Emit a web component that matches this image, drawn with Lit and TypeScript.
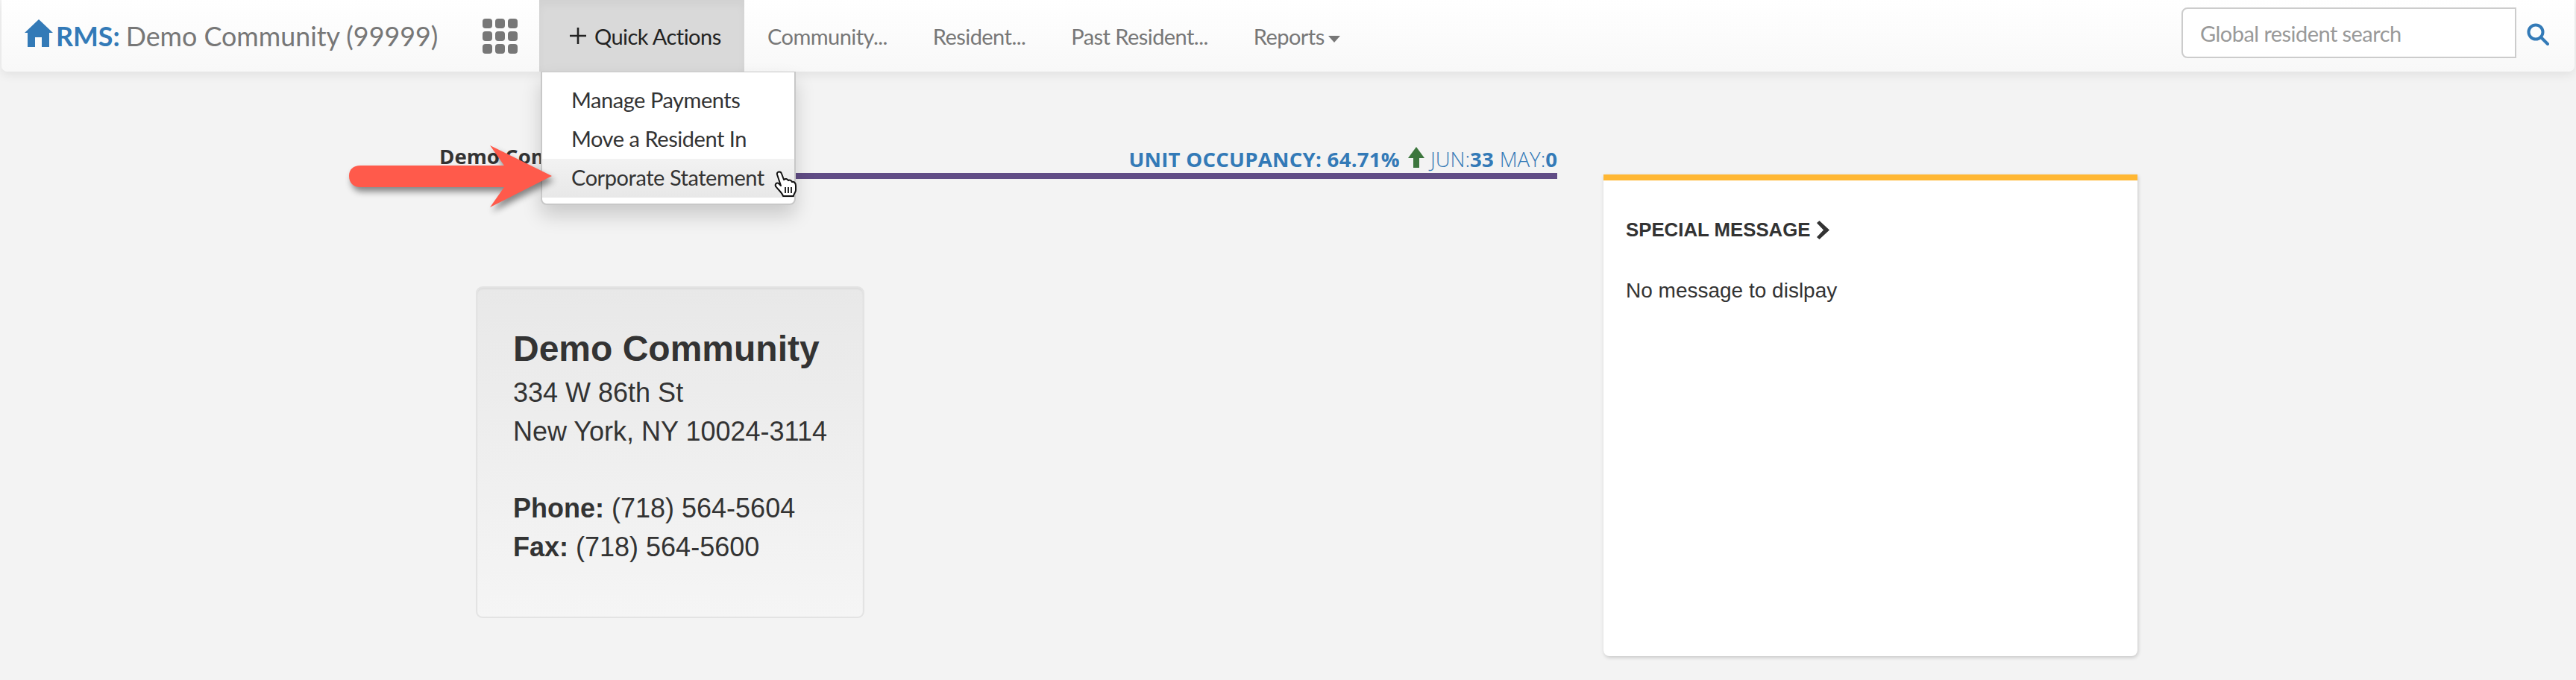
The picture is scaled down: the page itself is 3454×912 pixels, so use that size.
import { LitElement, html, css } from "lit";
import { customElement } from "lit/decorators.js";

@customElement("app-root")
export class AppRoot extends LitElement {
  static styles = css`
    :host {
      display: block;
      position: relative;
      width: 3454px;
      height: 912px;
      overflow: hidden;
      background: #f3f3f3;
      color: #333;
      font-family: "Liberation Sans", Arial, sans-serif;
    }

    .navbar {
      display: flex;
      align-items: stretch;
      height: 96px;
      margin: 0 2px;
      background: linear-gradient(to bottom, #ffffff, #f8f8f8);
      border-radius: 0 0 8px 8px;
      box-shadow: 0 4px 14px rgba(0, 0, 0, 0.08);
      font-family: Lato, sans-serif;
      font-size: 29px;
      letter-spacing: -0.55px;
      color: #777;
    }

    .brand {
      display: flex;
      align-items: center;
      width: 645px;
      padding-left: 30px;
      box-sizing: border-box;
      font-size: 35.8px;
      letter-spacing: 0;
      white-space: nowrap;
    }
    .brand svg {
      width: 40px;
      height: 38px;
      margin: -6px 3px 0 0;
      flex: none;
    }
    .brand b {
      color: #337ab7;
      margin-right: 8px;
    }

    .apps {
      display: block;
      width: 47px;
      height: 47px;
      align-self: center;
      margin-right: 29px;
      flex: none;
    }

    .quick {
      display: flex;
      align-items: center;
      width: 275px;
      padding-left: 41px;
      box-sizing: border-box;
      flex: none;
      background: #d9d9d9;
      box-shadow: inset 0 6px 12px rgba(0, 0, 0, 0.04);
      color: #222;
    }
    .quick svg {
      width: 22px;
      height: 22px;
      margin-right: 11px;
    }

    .links {
      display: flex;
      align-items: center;
      gap: 61px;
      padding-left: 31px;
    }
    .caret {
      display: inline-block;
      width: 0;
      height: 0;
      margin-left: 5px;
      vertical-align: middle;
      border-top: 9px solid #777;
      border-left: 8px solid transparent;
      border-right: 8px solid transparent;
    }

    .search {
      display: flex;
      align-items: center;
      margin-left: auto;
      padding-right: 34px;
    }
    .search-box {
      display: flex;
      align-items: center;
      width: 449px;
      height: 68px;
      box-sizing: border-box;
      padding-left: 23px;
      margin-top: -8px;
      background: #fff;
      border: 2px solid #ccc;
      border-radius: 8px 0 0 8px;
      color: #999;
    }
    .search svg {
      width: 30px;
      height: 30px;
      margin: -4px 0 0 14px;
    }

    .main {
      display: flex;
      padding-left: 589px;
    }

    .left {
      width: 1499px;
      flex: none;
    }

    .heading {
      display: flex;
      justify-content: space-between;
      align-items: flex-end;
      height: 144px;
      box-sizing: border-box;
      border-bottom: 8px solid #604c85;
      font-family: "Open Sans", sans-serif;
      font-size: 27.6px;
    }
    .heading .name {
      font-weight: 700;
      white-space: nowrap;
      margin-bottom: 4px;
    }
    .occupancy {
      display: flex;
      align-items: center;
      color: #337ab7;
      font-weight: 300;
      white-space: nowrap;
    }
    .occupancy b {
      font-weight: 700;
    }
    .occupancy .rate {
      letter-spacing: 0.25px;
    }
    .occupancy svg {
      width: 22px;
      height: 28px;
      margin: -4px 8px 0 11px;
    }
    .occupancy .gap {
      margin-left: 8px;
    }

    .well {
      width: 521px;
      height: 445px;
      box-sizing: border-box;
      margin: 144px 0 0 49px;
      padding: 49px 0 0 48px;
      background: linear-gradient(to bottom, #e8e8e8, #f5f5f5);
      border: 2px solid #e3e3e3;
      border-radius: 9px;
      box-shadow: inset 0 2px 2px rgba(0, 0, 0, 0.05);
      font-size: 36px;
      line-height: 52px;
      white-space: nowrap;
    }
    .well h2 {
      margin: 0;
      font-size: 48px;
      line-height: 66px;
      font-weight: 700;
    }
    .well .spacer {
      height: 51px;
    }

    .message {
      width: 716px;
      height: 646px;
      box-sizing: border-box;
      margin: 138px 0 0 62px;
      padding: 51px 30px 0;
      background: #fff;
      border-top: 8px solid #ffb733;
      border-radius: 0 0 8px 8px;
      box-shadow: 1px 2px 5px rgba(0, 0, 0, 0.18);
    }
    .message h3 {
      display: flex;
      align-items: center;
      margin: 0 0 49px;
      font-size: 25.8px;
      line-height: 30px;
      font-weight: 700;
    }
    .message h3 svg {
      width: 17px;
      height: 25px;
      margin-left: 8px;
    }
    .message p {
      margin: 0;
      font-size: 28px;
      line-height: 36px;
    }

    .dropdown {
      position: absolute;
      left: 725px;
      top: 96px;
      width: 342px;
      height: 179px;
      box-sizing: border-box;
      padding-top: 12px;
      background: #fff;
      border: 2px solid #c8c8c8;
      border-top-width: 1px;
      border-radius: 0 0 8px 8px;
      box-shadow: 0 14px 26px rgba(0, 0, 0, 0.17);
      font-family: Lato, sans-serif;
      font-size: 29px;
      letter-spacing: -0.45px;
      color: #333;
    }
    .dropdown div {
      height: 52px;
      line-height: 50px;
      padding-left: 39px;
      white-space: nowrap;
    }
    .dropdown .active {
      background: linear-gradient(to bottom, #f2f2f2, #e8e8e8);
    }

    .arrow {
      position: absolute;
      left: 460px;
      top: 190px;
      width: 300px;
      height: 105px;
      filter: drop-shadow(3px 6px 4px rgba(0, 0, 0, 0.45));
    }

    .cursor {
      position: absolute;
      left: 1030px;
      top: 222px;
      width: 46px;
      height: 50px;
    }
  `;

  protected render() {
    return html`
      <nav class="navbar">
        <div class="brand">
          <svg viewBox="0 0 40 38">
            <path fill="#337ab7" d="M20 0 39 18H34V37H24V24H15V37H5V18H1Z" />
          </svg>
          <b>RMS:</b> Demo Community (99999)
        </div>
        <svg class="apps" viewBox="0 0 47 47" fill="#777">
          <rect x="0" y="0" width="13" height="13" rx="4" />
          <rect x="17" y="0" width="13" height="13" rx="4" />
          <rect x="34" y="0" width="13" height="13" rx="4" />
          <rect x="0" y="17" width="13" height="13" rx="4" />
          <rect x="17" y="17" width="13" height="13" rx="4" />
          <rect x="34" y="17" width="13" height="13" rx="4" />
          <rect x="0" y="34" width="13" height="13" rx="4" />
          <rect x="17" y="34" width="13" height="13" rx="4" />
          <rect x="34" y="34" width="13" height="13" rx="4" />
        </svg>
        <div class="quick">
          <svg viewBox="0 0 22 22"><path fill="#222" d="M9.7 0h2.6v9.7H22v2.6h-9.7V22H9.7v-9.7H0V9.7h9.7Z" /></svg>
          Quick Actions
        </div>
        <div class="links">
          <span>Community...</span>
          <span>Resident...</span>
          <span>Past Resident...</span>
          <span>Reports<i class="caret"></i></span>
        </div>
        <div class="search">
          <div class="search-box">Global resident search</div>
          <svg viewBox="0 0 30 30" fill="none" stroke="#337ab7" stroke-width="4">
            <circle cx="12" cy="12" r="9.5" />
            <path d="M19 19 28 28" stroke-linecap="round" />
          </svg>
        </div>
      </nav>

      <div class="main">
        <div class="left">
          <div class="heading">
            <span class="name">Demo Community</span>
            <span class="occupancy">
              <b class="rate">UNIT OCCUPANCY: 64.71%</b>
              <svg viewBox="0 0 22 28"><path fill="#3c763d" d="M11 0 22 15H15V28H7V15H0Z" /></svg>
              JUN:<b>33</b><span class="gap">MAY:</span><b>0</b>
            </span>
          </div>
          <div class="well">
            <h2>Demo Community</h2>
            <div>334 W 86th St</div>
            <div>New York, NY 10024-3114</div>
            <div class="spacer"></div>
            <div><b>Phone:</b> (718) 564-5604</div>
            <div><b>Fax:</b> (718) 564-5600</div>
          </div>
        </div>
        <div class="message">
          <h3>
            SPECIAL MESSAGE
            <svg viewBox="0 0 17 25"><path fill="#333" d="M0 3 3.5 0 17 12.5 3.5 25 0 22 9 12.5Z" /></svg>
          </h3>
          <p>No message to dislpay</p>
        </div>
      </div>

      <div class="dropdown">
        <div>Manage Payments</div>
        <div>Move a Resident In</div>
        <div class="active">Corporate Statement</div>
      </div>

      <svg class="arrow" viewBox="0 0 300 105">
        <path fill="#ff5a4b" d="M197 5 280 46 197 88 216 61H23C14 61 8 55 8 46S14 32 23 32H216Z" />
      </svg>

      <svg class="cursor" viewBox="0 0 46 50">
        <path
          fill="#fff"
          stroke="#111"
          stroke-width="2"
          stroke-linejoin="round"
          d="M12 12C11 8 17 7 18 11L21 19C23 17 26 18 27 20 29 19 31 20 32 22 34 21 37 23 37 27V33C37 36 34 38 34 41H20C19 37 15 34 11 29 8 26 11 22 14 24L17 27Z"
        />
        <path stroke="#111" stroke-width="1.8" d="M23 29V37M27 29V37M31 29V37" />
      </svg>
    `;
  }
}

declare global {
  interface HTMLElementTagNameMap {
    "app-root": AppRoot;
  }
}
